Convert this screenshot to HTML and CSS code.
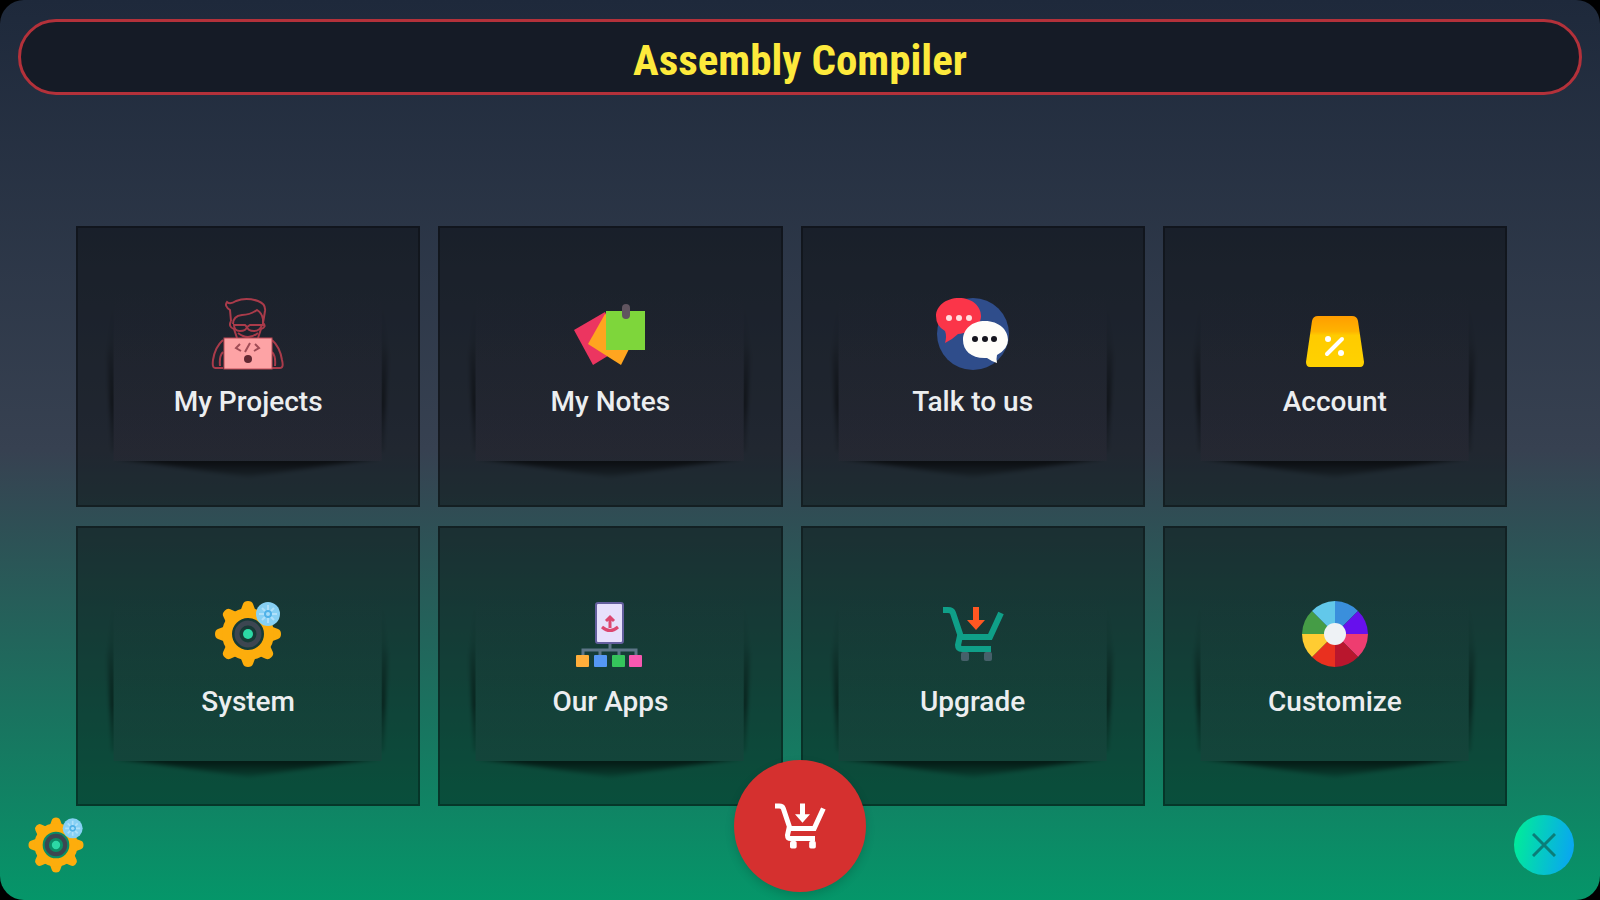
FILE: index.html
```html
<!DOCTYPE html>
<html lang="en">
<head>
  <meta charset="UTF-8" />
  <meta name="viewport" content="width=device-width, initial-scale=1.0"/>
  <title>Assembly Compiler</title>
  <link rel="stylesheet" href="styles.css">
</head>
<body>

  <!-- shared shapes -->
  <svg class="defs" width="0" height="0" aria-hidden="true">
    <defs>
      <filter id="soft" x="-20%" y="-20%" width="140%" height="140%"><feGaussianBlur stdDeviation="2"/></filter>
      <linearGradient id="side" x1="0" y1="0" x2="0" y2="1">
        <stop offset="0" stop-color="#000" stop-opacity="0"/>
        <stop offset=".3" stop-color="#000" stop-opacity=".1"/>
        <stop offset=".7" stop-color="#000" stop-opacity=".6"/>
        <stop offset="1" stop-color="#000" stop-opacity=".3"/>
      </linearGradient>
      <linearGradient id="under" x1="0" y1="0" x2="0" y2="1">
        <stop offset="0" stop-color="#000" stop-opacity=".75"/>
        <stop offset="1" stop-color="#000" stop-opacity=".15"/>
      </linearGradient>
      <linearGradient id="panel" x1="0" y1="0" x2="0" y2="1">
        <stop offset="0" stop-color="#3a2a3a" stop-opacity="0"/>
        <stop offset="1" stop-color="#3a2a3a" stop-opacity=".16"/>
      </linearGradient>
      <linearGradient id="gold" x1="0" y1="0" x2="0" y2="1">
        <stop offset="0" stop-color="#ff9d00"/>
        <stop offset=".3" stop-color="#ffb300"/>
        <stop offset=".38" stop-color="#ffcb00"/>
        <stop offset="1" stop-color="#ffd200"/>
      </linearGradient>
      <clipPath id="below"><rect x="0" y="236" width="344" height="44"/></clipPath>
      <clipPath id="outside"><path d="M0 0H36V280H0zM307 0H344V280H307z"/></clipPath>
    </defs>

    <symbol id="paper" viewBox="0 0 344 280" preserveAspectRatio="none">
      <rect x="36" y="64" width="271" height="172" fill="url(#panel)"/>
      <g clip-path="url(#outside)"><path d="M36 70L30 130L35 226H37V70zM307 70L313 130L308 226H306V70z" fill="url(#side)" filter="url(#soft)"/></g>
      <g clip-path="url(#below)"><path d="M36 233H306L172 252z" fill="url(#under)" filter="url(#soft)"/></g>
    </symbol>

    <symbol id="gear" viewBox="0 0 72 72">
      <g fill="#fdad0c">
        <path id="tooth" d="M28 14L31 6Q32 3 36 3T41 6L44 14z"/>
        <use href="#tooth" transform="rotate(45 36 36)"/>
        <use href="#tooth" transform="rotate(90 36 36)"/>
        <use href="#tooth" transform="rotate(135 36 36)"/>
        <use href="#tooth" transform="rotate(180 36 36)"/>
        <use href="#tooth" transform="rotate(225 36 36)"/>
        <use href="#tooth" transform="rotate(270 36 36)"/>
        <use href="#tooth" transform="rotate(315 36 36)"/>
      </g>
      <circle cx="36" cy="36" r="21" fill="none" stroke="#fdad0c" stroke-width="10"/>
      <circle cx="36" cy="36" r="11" fill="none" stroke="#3c4651" stroke-width="5"/>
      <circle cx="36" cy="36" r="5" fill="#2cd9a5"/>
      <circle cx="56" cy="16" r="12" fill="#87d0f4"/>
      <path d="M56 7V25M47 16H65M50 10L62 22M62 10L50 22" stroke="#b0e0fa" stroke-width="2"/>
      <circle cx="56" cy="16" r="4" fill="#4fb1e8"/>
      <circle cx="56" cy="16" r="2" fill="#a5dcf8"/>
    </symbol>

    <symbol id="cart" viewBox="0 0 72 72">
      <g class="wheels"><rect x="24" y="54" width="8" height="9" rx="2"/><rect x="47" y="54" width="8" height="9" rx="2"/></g>
      <path d="M6 12H11Q15 12 16 15L24 39H53L64 15M23 38L21 47Q21 51 25 51H54" fill="none" stroke="currentColor" stroke-width="6"/>
      <path class="arrow" d="M36 9H42V22H48L39 32L30 22H36z"/>
    </symbol>
  </svg>

  <div class="screen">
    <header class="title-bar">
      <h1>Assembly Compiler</h1>
    </header>

    <main class="menu">
      <button class="card" type="button">
        <svg class="paper" aria-hidden="true"><use href="#paper"/></svg>
        <svg class="icon" viewBox="0 0 72 72" aria-hidden="true">
          <g fill="none" stroke="#a93b4a" stroke-width="2">
            <path d="M19 23L18 12Q12 8 15 4Q18 7 24 3Q34 -1 46 3Q54 6 53 13L51 25"/>
            <path d="M21 26Q21 18 30 17Q38 17 45 12Q50 15 51 21V28"/>
            <path d="M19 23Q16 29 22 31L25 40M51 25Q55 29 49 31L46 40"/>
            <path d="M22 27H33L35 29L38 27H50Q48 33 42 33Q36 33 35 29Q34 33 28 33Q22 33 22 27zM26 35Q36 43 46 35"/>
            <path d="M11 42Q3 49 1 62Q0 70 3 70H11M60 42Q68 49 70 62Q72 70 68 70H60M8 68Q7 58 11 54M63 68Q64 58 60 54"/>
          </g>
          <rect x="12" y="40" width="48" height="31" fill="#fda3a5" stroke="#c04a57"/>
          <path d="M28 46L24 50L29 53M43 46L47 50L42 53M38 45L33 54" fill="none" stroke="#9f4c56" stroke-width="2"/>
          <circle cx="36" cy="61" r="4" fill="#612832"/>
        </svg>
        <span class="label">My Projects</span>
      </button>

      <button class="card" type="button">
        <svg class="paper" aria-hidden="true"><use href="#paper"/></svg>
        <svg class="icon" viewBox="0 0 72 72" aria-hidden="true">
          <path d="M0 32L31 14L50 48L19 67z" fill="#ec3560"/>
          <path d="M31 16L64 33L47 67L14 46z" fill="#ffa51f"/>
          <rect x="32" y="13" width="39" height="39" fill="#7ed63b"/>
          <rect x="48" y="6" width="8" height="15" rx="4" fill="#60545f"/>
        </svg>
        <span class="label">My Notes</span>
      </button>

      <button class="card" type="button">
        <svg class="paper" aria-hidden="true"><use href="#paper"/></svg>
        <svg class="icon" viewBox="0 0 72 72" aria-hidden="true">
          <circle cx="36" cy="36" r="36" fill="#2f4d8b"/>
          <path d="M22 0C35 0 44 8 44 18S34 35 21 36Q16 41 8 45Q10 38 8 33Q-1 28 -1 18C-1 8 9 0 22 0z" fill="#fb3549"/>
          <path d="M48 23C62 23 71 32 71 42Q71 51 60 57Q59 61 60 65Q54 63 50 60C35 61 26 53 26 42S35 23 48 23z" fill="#fffefa"/>
          <g fill="#ffdfe0"><circle cx="12" cy="20" r="3"/><circle cx="22" cy="20" r="3"/><circle cx="32" cy="20" r="3"/></g>
          <g fill="#15151d"><circle cx="38" cy="41" r="3"/><circle cx="48" cy="41" r="3"/><circle cx="57" cy="41" r="3"/></g>
        </svg>
        <span class="label">Talk to us</span>
      </button>

      <button class="card" type="button">
        <svg class="paper" aria-hidden="true"><use href="#paper"/></svg>
        <svg class="icon" viewBox="0 0 72 72" aria-hidden="true">
          <path d="M19 18H53Q58 18 59 23L65 64Q65 69 61 69H11Q7 69 7 64L13 23Q14 18 19 18z" fill="url(#gold)"/>
          <path d="M43 41L28 56" stroke="#fff" stroke-width="4" stroke-linecap="round"/>
          <circle cx="29" cy="41" r="3" fill="#fff"/><circle cx="42" cy="55" r="3" fill="#fff"/>
        </svg>
        <span class="label">Account</span>
      </button>

      <button class="card" type="button">
        <svg class="paper" aria-hidden="true"><use href="#paper"/></svg>
        <svg class="icon" aria-hidden="true"><use href="#gear"/></svg>
        <span class="label">System</span>
      </button>

      <button class="card" type="button">
        <svg class="paper" aria-hidden="true"><use href="#paper"/></svg>
        <svg class="icon" viewBox="0 0 72 72" aria-hidden="true">
          <path d="M36 45V52M9 58V52H62V58M26 52V58M45 52V58" fill="none" stroke="#5d7587" stroke-width="3"/>
          <rect x="22" y="5" width="27" height="40" rx="2" fill="#e7e0fc" stroke="#645f9e" stroke-width="2"/>
          <path d="M36 30V20M32 23L36 19L40 23M28 29Q36 36 44 29" fill="none" stroke="#dc4770" stroke-width="3"/>
          <rect x="2" y="57" width="13" height="12" rx="1" fill="#ffae3b"/>
          <rect x="20" y="57" width="13" height="12" rx="1" fill="#5597f4"/>
          <rect x="38" y="57" width="13" height="12" rx="1" fill="#35c55c"/>
          <rect x="55" y="57" width="13" height="12" rx="1" fill="#f758b0"/>
        </svg>
        <span class="label">Our Apps</span>
      </button>

      <button class="card upgrade" type="button">
        <svg class="paper" aria-hidden="true"><use href="#paper"/></svg>
        <svg class="icon" aria-hidden="true"><use href="#cart"/></svg>
        <span class="label">Upgrade</span>
      </button>

      <button class="card" type="button">
        <svg class="paper" aria-hidden="true"><use href="#paper"/></svg>
        <svg class="icon" viewBox="0 0 72 72" aria-hidden="true">
          <path d="M36 36V3A33 33 0 0 1 59 13z" fill="#3a8fdc"/>
          <path d="M36 36L59 13A33 33 0 0 1 69 36z" fill="#6710ed"/>
          <path d="M36 36H69A33 33 0 0 1 59 59z" fill="#ee3d70"/>
          <path d="M36 36L59 59A33 33 0 0 1 36 69z" fill="#b9162d"/>
          <path d="M36 36V69A33 33 0 0 1 13 59z" fill="#e9301f"/>
          <path d="M36 36L13 59A33 33 0 0 1 3 36z" fill="#ffcc32"/>
          <path d="M36 36H3A33 33 0 0 1 13 13z" fill="#459c46"/>
          <path d="M36 36L13 13A33 33 0 0 1 36 3z" fill="#62c8ea"/>
          <circle cx="36" cy="36" r="11" fill="#eef2f5"/>
        </svg>
        <span class="label">Customize</span>
      </button>
    </main>

    <footer class="bottom-bar">
      <button class="settings" type="button" aria-label="Settings">
        <svg aria-hidden="true"><use href="#gear"/></svg>
      </button>
      <button class="buy" type="button" aria-label="Buy">
        <svg aria-hidden="true"><use href="#cart"/></svg>
      </button>
      <button class="close" type="button" aria-label="Close">
        <svg viewBox="0 0 24 24" aria-hidden="true"><path d="M1 1L23 23M23 1L1 23" stroke="#0b7d78" stroke-width="3"/></svg>
      </button>
    </footer>
  </div>

</body>
</html>
```
FILE: styles.css
```css
:root {
  --title: #fdea3c;
  --line: #b3313a;
  --accent: #d5302f;
}

* {
  box-sizing: border-box;
  margin: 0;
  padding: 0;
}

body {
  background: #000;
  font-family: Roboto, "Liberation Sans", sans-serif;
}

button {
  border: none;
  background: none;
  font: inherit;
  cursor: pointer;
}

.defs {
  position: absolute;
}

.screen {
  position: relative;
  display: flex;
  flex-direction: column;
  min-height: 100vh;
  padding: 19px 18px 25px;
  border-radius: 24px;
  background: linear-gradient(#1e293b, #374151 50%, #059669);
}

.title-bar {
  display: flex;
  justify-content: center;
  align-items: center;
  height: 76px;
  padding-top: 6px;
  border: 3px solid var(--line);
  border-radius: 38px;
  background: #151b26;
}

h1 {
  font-family: "Roboto Condensed", "Liberation Sans Narrow", Roboto, sans-serif;
  font-size: 43px;
  font-weight: bold;
  line-height: 56px;
  color: var(--title);
}

.menu {
  flex: 1;
  display: grid;
  grid-template-columns: repeat(4, 1fr);
  grid-auto-rows: minmax(240px, 1fr);
  gap: 19px 18px;
  margin: 131px 75px 9px 58px;
}

.card {
  position: relative;
  display: flex;
  flex-direction: column;
  align-items: center;
  justify-content: center;
  gap: 16px;
  padding-bottom: 16px;
  border: 2px solid rgba(0, 0, 0, 0.3);
  background: rgba(0, 0, 0, 0.4);
}

.paper {
  position: absolute;
  inset: 0;
  width: 100%;
  height: 100%;
}

.icon {
  position: relative;
  width: 72px;
  height: 72px;
  overflow: visible;
}

.label {
  position: relative;
  font-size: 28px;
  font-weight: 500;
  line-height: 32px;
  color: #eceef0;
}

.upgrade .icon {
  --wheel: #46606a;
  --arrow: #ff5722;
  color: #0f9f88;
}

.wheels {
  fill: var(--wheel, currentColor);
}

.arrow {
  fill: var(--arrow, currentColor);
}

.bottom-bar {
  display: flex;
  justify-content: space-between;
  align-items: center;
  padding: 0 8px;
}

.settings svg {
  display: block;
  width: 60px;
  height: 60px;
}

/* floats over the lower row of cards */
.buy {
  position: absolute;
  left: 50%;
  bottom: 8px;
  display: flex;
  align-items: center;
  justify-content: center;
  width: 132px;
  height: 132px;
  transform: translateX(-50%);
  border-radius: 50%;
  background: var(--accent);
  color: #fff;
  box-shadow: 0 4px 10px rgba(0, 0, 0, 0.15);
}

.buy svg {
  width: 60px;
  height: 60px;
}

.close {
  display: flex;
  align-items: center;
  justify-content: center;
  width: 60px;
  height: 60px;
  border-radius: 50%;
  background: linear-gradient(100deg, #00f094, #0aa0f8);
}

.close svg {
  width: 24px;
  height: 24px;
}
```
